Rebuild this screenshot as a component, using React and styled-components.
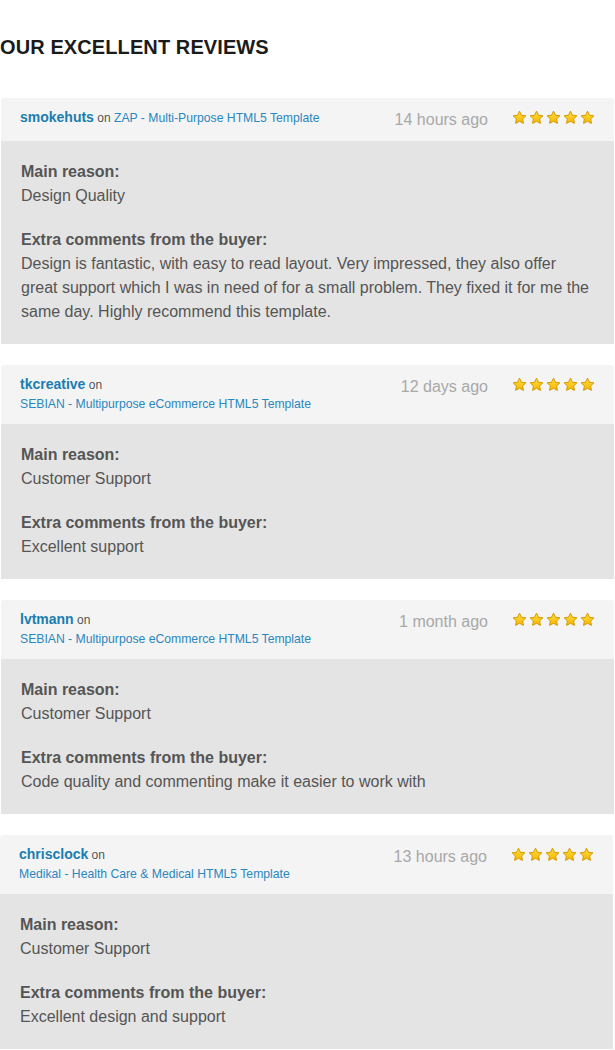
import React from "react";
import styled, { createGlobalStyle } from "styled-components";

const GlobalStyle = createGlobalStyle`
    body {
        margin: 0;
        background: #fff;
        font-family: "Liberation Sans", Arial, sans-serif;
    }
`;

const reviews = [
    {
        user: "smokehuts",
        item: "ZAP - Multi-Purpose HTML5 Template",
        time: "14 hours ago",
        reason: "Design Quality",
        comment:
            "Design is fantastic, with easy to read layout. Very impressed, they also offer great support which I was in need of for a small problem. They fixed it for me the same day. Highly recommend this template.",
    },
    {
        user: "tkcreative",
        item: "SEBIAN - Multipurpose eCommerce HTML5 Template",
        time: "12 days ago",
        reason: "Customer Support",
        comment: "Excellent support",
    },
    {
        user: "lvtmann",
        item: "SEBIAN - Multipurpose eCommerce HTML5 Template",
        time: "1 month ago",
        reason: "Customer Support",
        comment: "Code quality and commenting make it easier to work with",
    },
    {
        user: "chrisclock",
        item: "Medikal - Health Care & Medical HTML5 Template",
        time: "13 hours ago",
        reason: "Customer Support",
        comment: "Excellent design and support",
        shift: true,
    },
];

function Star() {
    return (
        <svg width="15" height="15" viewBox="0 0 24 24">
            <defs>
                <linearGradient id="starFill" x1="0" y1="0" x2="0" y2="1">
                    <stop offset="0" stopColor="#ffe040" />
                    <stop offset="1" stopColor="#f7b500" />
                </linearGradient>
            </defs>
            <path
                d="M12 1.8l3.1 6.6 7.1.9-5.2 5 1.3 7.1L12 18l-6.3 3.4L7 14.3l-5.2-5 7.1-.9z"
                fill="url(#starFill)"
                stroke="#d39a00"
                strokeWidth="1.6"
                strokeLinejoin="round"
            />
        </svg>
    );
}

function App() {
    return (
        <Page>
            <GlobalStyle />
            <Title>OUR EXCELLENT REVIEWS</Title>
            {reviews.map((r) => (
                <Card key={r.user} shift={r.shift}>
                    <Header>
                        <Who>
                            <User>{r.user}</User> <On>on</On> <Item>{r.item}</Item>
                        </Who>
                        <Time>{r.time}</Time>
                        <Stars>
                            {[0, 1, 2, 3, 4].map((i) => (
                                <Star key={i} />
                            ))}
                        </Stars>
                    </Header>
                    <Body>
                        <Label>Main reason:</Label>
                        <Text>{r.reason}</Text>
                        <Label className="gap">Extra comments from the buyer:</Label>
                        <Text>{r.comment}</Text>
                    </Body>
                </Card>
            ))}
        </Page>
    );
}

const Page = styled.div`
    width: 615px;
    overflow: hidden;
`;

const Title = styled.h2`
    margin: 35px 0 39px;
    font-size: 20px;
    line-height: 24px;
    font-weight: 700;
    color: #1b1b1b;
    letter-spacing: 0.1px;
`;

const Card = styled.div`
    margin: 0 1px 21px ${(p) => (p.shift ? "0" : "1px")};
    width: 613px;
`;

const Header = styled.div`
    display: flex;
    align-items: flex-start;
    padding: 10px 19px 10px 19px;
    background: #f4f4f4;
    border-radius: 3px 3px 0 0;
`;

const Who = styled.div`
    flex: 1;
    margin-right: 24px;
    font-size: 12px;
    line-height: 19px;
`;

const User = styled.span`
    font-size: 14px;
    font-weight: 700;
    color: #1a7db0;
`;

const On = styled.span`
    color: #555;
`;

const Item = styled.span`
    color: #2a87c0;
    font-size: 12.2px;
    white-space: nowrap;
`;

const Time = styled.div`
    font-size: 16px;
    line-height: 23px;
    color: #a8a8a8;
`;

const Stars = styled.div`
    display: flex;
    gap: 2px;
    margin: 2px 0 0 24px;
`;

const Body = styled.div`
    background: #e4e4e4;
    padding: 19px 20px 20px 20px;
    color: #555;
    font-size: 16px;
    line-height: 24px;
`;

const Label = styled.div`
    font-weight: 700;
    &.gap {
        margin-top: 20px;
    }
`;

const Text = styled.div``;

export default App;
